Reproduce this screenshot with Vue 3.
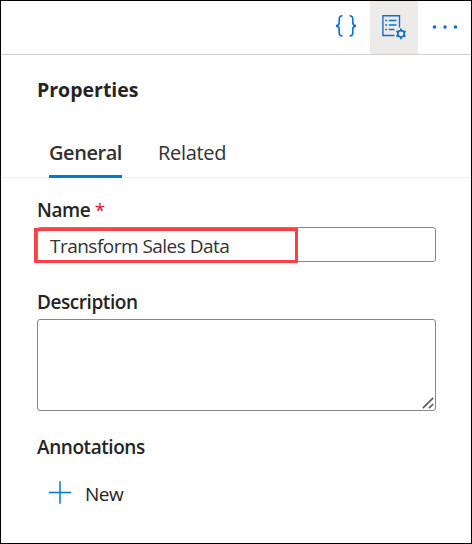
<script setup>
import { ref } from 'vue'

const tabs = ['General', 'Related']
const activeTab = ref('General')
const name = ref('Transform Sales Data')
</script>

<template>
  <section class="panel">
    <header class="toolbar">
      <button class="tool" aria-label="Code">
        <svg width="24" height="25" viewBox="0 0 24 25" fill="none" stroke="currentColor" stroke-width="1.6">
          <path d="M8.500 .8C6 .8 5.200 1.800 5.200 3.800v3.800c0 2-1 3.100-3.200 3.300 2.200.2 3.200 1.300 3.200 3.300v3.800c0 2 .8 3 3.300 3" />
          <path d="M15.500 .8C18 .8 18.800 1.800 18.800 3.800v3.800c0 2 1 3.100 3.200 3.300-2.200.2-3.200 1.300-3.200 3.300v3.800c0 2-.8 3-3.300 3" />
        </svg>
      </button>
      <button class="tool selected" aria-label="Settings">
        <svg width="26" height="25" viewBox="0 0 26 25" fill="none" stroke="currentColor" stroke-width="1.4">
          <path d="M13.500 20.500H1.900V.8h16.600v11.800" />
          <path d="M4.300 5.500h1.800M4.300 10h1.800M4.300 14.500h1.800M7.800 5.500h7.700M7.800 10h7.700M7.800 14.500h5.700" />
          <circle cx="20" cy="18.800" r="3.200" stroke-width="1.600" />
          <path d="M20 15.600v-2.200M20 22v2.200M22.700 17.200l1.900-1.100M17.300 20.400l-1.900 1.100M17.300 17.200l-1.900-1.100M22.700 20.400l1.900 1.100" stroke-width="1.800" />
        </svg>
      </button>
      <button class="tool more" aria-label="More">
        <svg width="26" height="7" viewBox="0 0 26 7" fill="currentColor">
          <circle cx="2.500" cy="3" r="1.800" /><circle cx="13" cy="3" r="1.800" /><circle cx="23.500" cy="3" r="1.800" />
        </svg>
      </button>
    </header>

    <h2 class="title">Properties</h2>

    <nav class="tabs">
      <button v-for="tab in tabs" :key="tab" class="tab" :class="{ active: tab === activeTab }" @click="activeTab = tab">
        {{ tab }}
      </button>
    </nav>

    <div class="form">
      <label class="label name-label" for="name">Name <span class="required">*</span></label>
      <div class="field">
        <input id="name" v-model="name" class="input" spellcheck="false" />
        <div class="highlight"></div>
      </div>

      <label class="label description-label" for="description">Description</label>
      <div class="field">
        <textarea id="description" class="textarea"></textarea>
        <svg class="grip" width="12" height="12" viewBox="0 0 12 12" stroke="#605e5c" stroke-width="1.700">
          <path d="M.8 11.200L11.200.8M7 11.200l4.200-4.200" />
        </svg>
      </div>

      <div class="label annotations-label">Annotations</div>
      <button class="new">
        <svg width="24" height="24" viewBox="0 0 24 24" stroke="#0078d4" stroke-width="1.500">
          <path d="M.8 11.500h22.400M12 .3v22.400" />
        </svg>
        <span class="new-text">New</span>
      </button>
    </div>
  </section>
</template>

<style>
body {
  margin: 0;
}
</style>

<style scoped>
.panel {
  box-sizing: border-box;
  width: 472px;
  height: 544px;
  border: 1px solid #000;
  background: #fff;
  color: #252423;
  font-family: "Open Sans", "Noto Sans", sans-serif;
  font-size: 19px;
}

button {
  border: 0;
  padding: 0;
  background: none;
  color: inherit;
  font: inherit;
}

.toolbar {
  box-sizing: border-box;
  height: 54px;
  display: flex;
  justify-content: flex-end;
  border-bottom: 1px solid #d2d0ce;
}

.tool {
  width: 48px;
  display: flex;
  align-items: center;
  justify-content: center;
  color: #0f6fd0;
}

.selected {
  background: #edebe9;
}

.more {
  width: 53px;
}

.title {
  margin: 0;
  padding: 20px 36px 0;
  height: 49px;
  font-size: 19.500px;
  line-height: 30px;
  font-weight: 700;
}

.tabs {
  box-sizing: border-box;
  height: 54px;
  padding-left: 48px;
  display: flex;
  gap: 36px;
  border-bottom: 1px solid #edebe9;
}

.tab {
  box-sizing: border-box;
  height: 54px;
  padding-top: 6px;
  border-bottom: 3px solid transparent;
  line-height: 28px;
  font-size: 20px;
  letter-spacing: -0.300px;
  color: #323130;
}

.tab.active {
  font-weight: 600;
  letter-spacing: -0.450px;
  border-bottom-color: #0078d4;
}

.form {
  padding: 18px 35px 0 36px;
}

.label {
  display: block;
  font-weight: 600;
  font-size: 19px;
  line-height: 28px;
  letter-spacing: -0.430px;
}

.required {
  color: #e81123;
  font-weight: 400;
}

.field {
  position: relative;
  display: flex;
}

.name-label {
  height: 31px;
}

.description-label {
  margin-top: 26px;
  height: 31px;
}

.annotations-label {
  margin-top: 22px;
}

.input,
.textarea {
  box-sizing: border-box;
  width: 399px;
  height: 35px;
  border: 1px solid #8a8886;
  border-radius: 3px;
  padding: 2px 12px 0;
  background: #fff;
  color: #323130;
  font: inherit;
  letter-spacing: -0.520px;
  outline: none;
}

.textarea {
  height: 92px;
  resize: none;
}

.highlight {
  position: absolute;
  left: -3px;
  top: 1px;
  box-sizing: border-box;
  width: 264px;
  height: 35px;
  border: 3px solid #fb4143;
}

.grip {
  position: absolute;
  right: 2px;
  bottom: 2px;
}

.new {
  margin: 16px 0 0 11px;
  display: flex;
  align-items: center;
  gap: 13px;
  line-height: 28px;
  letter-spacing: -0.500px;
}

.new-text {
  padding-top: 3px;
}
</style>
